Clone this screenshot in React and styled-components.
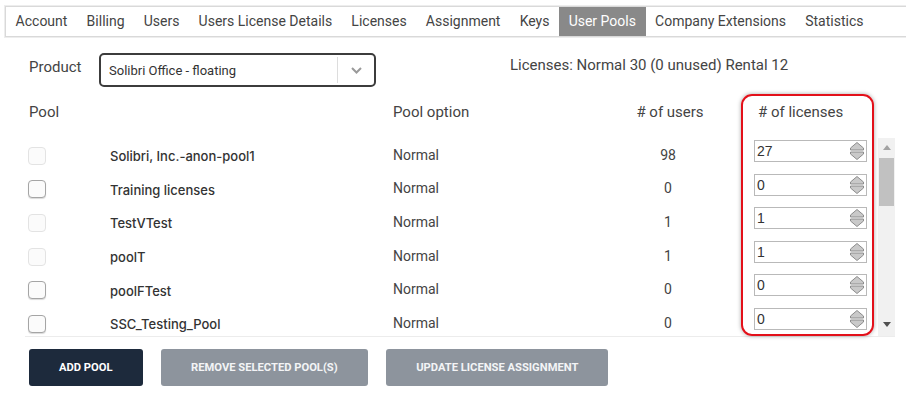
import React from "react";
import styled, { createGlobalStyle } from "styled-components";

const tabs = [
  "Account",
  "Billing",
  "Users",
  "Users License Details",
  "Licenses",
  "Assignment",
  "Keys",
  "User Pools",
  "Company Extensions",
  "Statistics",
];

const pools = [
  { name: "Solibri, Inc.-anon-pool1", option: "Normal", users: 98, licenses: 27, enabled: false },
  { name: "Training licenses", option: "Normal", users: 0, licenses: 0, enabled: true },
  { name: "TestVTest", option: "Normal", users: 1, licenses: 1, enabled: false },
  { name: "poolT", option: "Normal", users: 1, licenses: 1, enabled: false },
  { name: "poolFTest", option: "Normal", users: 0, licenses: 0, enabled: true },
  { name: "SSC_Testing_Pool", option: "Normal", users: 0, licenses: 0, enabled: true },
];

const Spinner = () => (
  <svg width="16" height="20" viewBox="0 0 16 20">
    <path d="M1.5 9 V7 L8 1.5 L14.5 7 V9 Z" fill="#c9c9c9" stroke="#8c8c8c" strokeWidth="1" strokeLinejoin="round" />
    <path d="M1.5 11 V13 L8 18.5 L14.5 13 V11 Z" fill="#c9c9c9" stroke="#8c8c8c" strokeWidth="1" strokeLinejoin="round" />
  </svg>
);

const App = () => {
  const [active, setActive] = React.useState("User Pools");

  return (
    <>
      <GlobalStyle />
      <TabBar>
        {tabs.map((tab) => (
          <Tab key={tab} isActive={tab === active} onClick={() => setActive(tab)}>
            {tab}
          </Tab>
        ))}
      </TabBar>

      <Content>
        <ProductRow>
          <Label>Product</Label>
          <Select>
            <SelectValue>Solibri Office - floating</SelectValue>
            <SelectArrow>
              <svg width="11" height="7" viewBox="0 0 11 7">
                <path d="M1 1 L5.5 5.5 L10 1" fill="none" stroke="#9a9a9a" strokeWidth="2" />
              </svg>
            </SelectArrow>
          </Select>
          <Summary>Licenses: Normal 30 (0 unused) Rental 12</Summary>
        </ProductRow>

        <TableWrap>
          <Highlight />
          <HeaderRow>
            <HeadCell>Pool</HeadCell>
            <HeadCell />
            <HeadCell>Pool option</HeadCell>
            <HeadCell center>
              # of users
            </HeadCell>
            <HeadCell indent>
              # of licenses
            </HeadCell>
          </HeaderRow>

          <Body>
            <Rows>
              {pools.map((pool) => (
                <Row key={pool.name}>
                  <Cell>
                    <Checkbox enabled={pool.enabled} />
                  </Cell>
                  <Name>{pool.name}</Name>
                  <Cell>{pool.option}</Cell>
                  <Cell center>{pool.users}</Cell>
                  <InputCell>
                    <NumberBox>
                      <NumberValue>{pool.licenses}</NumberValue>
                      <Spinner />
                    </NumberBox>
                  </InputCell>
                </Row>
              ))}
            </Rows>
            <Scrollbar>
              <ScrollArrow>
                <svg width="8" height="5" viewBox="0 0 8 5">
                  <path d="M0 5 L4 0 L8 5 Z" fill="#a3a3a3" />
                </svg>
              </ScrollArrow>
              <Thumb />
              <ScrollArrow bottom>
                <svg width="8" height="5" viewBox="0 0 8 5">
                  <path d="M0 0 L4 5 L8 0 Z" fill="#505050" />
                </svg>
              </ScrollArrow>
            </Scrollbar>
          </Body>
        </TableWrap>

        <Buttons>
          <Button primary>Add pool</Button>
          <Button>Remove selected pool(s)</Button>
          <Button>Update license assignment</Button>
        </Buttons>
      </Content>
    </>
  );
};

const GlobalStyle = createGlobalStyle`
  body {
    margin: 0;
    background: #ffffff;
    font-family: Roboto, "Liberation Sans", sans-serif;
    color: #444444;
  }
`;

const TabBar = styled.div`
  display: flex;
  margin: 6px 0 0 5px;
  height: 29px;
  border: 1px solid #d9d9d9;
  border-right: none;
  box-shadow: 0 0 0 1px #ededed;
`;

const Tab = styled.div`
  padding: 0 9.6px;
  line-height: 29px;
  font-size: 14px;
  cursor: pointer;
  color: ${(props) => (props.isActive ? "#ffffff" : "#444444")};
  background-color: ${(props) => (props.isActive ? "#898989" : "transparent")};
`;

const Content = styled.div`
  padding-left: 29px;
`;

const ProductRow = styled.div`
  display: flex;
  align-items: flex-start;
  margin-top: 16px;
`;

const Label = styled.div`
  width: 70px;
  font-size: 15px;
  margin-top: 5px;
`;

const Select = styled.div`
  box-sizing: border-box;
  display: flex;
  align-items: center;
  width: 277px;
  height: 34px;
  border: 2px solid #3c3c3c;
  border-radius: 5px;
`;

const SelectValue = styled.div`
  flex: 1;
  padding-left: 8px;
  font-size: 13px;
  color: #333333;
`;

const SelectArrow = styled.div`
  display: flex;
  align-items: center;
  justify-content: center;
  width: 36px;
  height: 26px;
  border-left: 1px solid #dddddd;
`;

const Summary = styled.div`
  margin-left: 134px;
  margin-top: 3px;
  font-size: 15px;
`;

const TableWrap = styled.div`
  position: relative;
  margin-top: 11px;
  width: 866px;
`;

const Highlight = styled.div`
  position: absolute;
  left: 712px;
  top: -4px;
  width: 133px;
  height: 242px;
  box-sizing: border-box;
  border: 2px solid #e3101a;
  border-radius: 11px;
  box-shadow: 0 0 4px rgba(0, 0, 0, 0.35);
  pointer-events: none;
`;

const columns = "81px 283px 217px 120px 148px";

const HeaderRow = styled.div`
  display: grid;
  grid-template-columns: ${columns};
  height: 28px;
  align-items: center;
`;

const HeadCell = styled.div`
  font-size: 15px;
  text-align: ${(props) => (props.center ? "center" : "left")};
  padding-left: ${(props) => (props.indent ? "28px" : "0")};
`;

const Body = styled.div`
  display: flex;
  margin-top: 12px;
  margin-left: -4px;
  padding-left: 4px;
  height: 198px;
  overflow: hidden;
  border-bottom: 1px solid #ececec;
`;

const Rows = styled.div`
  width: 849px;
`;

const Row = styled.div`
  display: grid;
  grid-template-columns: ${columns};
  height: 33.6px;
  align-items: center;
`;

const Cell = styled.div`
  font-size: 14px;
  color: #444444;
  text-align: ${(props) => (props.center ? "center" : "left")};
  padding-right: ${(props) => (props.center ? "4px" : "0")};
`;

const Name = styled.div`
  font-family: Inter, "Liberation Sans", sans-serif;
  font-weight: 500;
  font-size: 13px;
  color: #333333;
  padding-top: 3px;
`;

const Checkbox = styled.div`
  box-sizing: border-box;
  width: 18px;
  height: 18px;
  margin-left: -1px;
  margin-top: 2px;
  border-radius: 4px;
  background: #fbfbfb;
  border: 1px solid ${(props) => (props.enabled ? "#a5a5a5" : "#e3e3e3")};
  box-shadow: ${(props) => (props.enabled ? "0 1px 1px rgba(0,0,0,0.15)" : "none")};
`;

const InputCell = styled.div`
  align-self: start;
  padding: 2px 0 0 24px;
`;

const NumberBox = styled.div`
  box-sizing: border-box;
  display: flex;
  align-items: center;
  width: 113px;
  height: 22px;
  padding: 0 1px 0 2px;
  border: 1px solid #b9b9b9;
  background: #ffffff;
`;

const NumberValue = styled.div`
  flex: 1;
  font-family: "Liberation Sans", Arial, sans-serif;
  font-size: 14px;
  color: #333333;
`;

const Scrollbar = styled.div`
  display: flex;
  flex-direction: column;
  width: 17px;
  background: #f1f1f1;
`;

const ScrollArrow = styled.div`
  display: flex;
  align-items: center;
  justify-content: center;
  height: 19px;
  margin-top: ${(props) => (props.bottom ? "auto" : "0")};
  margin-bottom: ${(props) => (props.bottom ? "2px" : "0")};
`;

const Thumb = styled.div`
  height: 48px;
  margin: 1px 1px 0;
  background: #c1c1c1;
`;

const Buttons = styled.div`
  display: flex;
  gap: 18.5px;
  margin-top: 12px;
`;

const Button = styled.button`
  height: 37px;
  padding: 0 30px;
  border: none;
  border-radius: 3px;
  font-family: Roboto, "Liberation Sans", sans-serif;
  font-weight: 700;
  font-size: 11.2px;
  text-transform: uppercase;
  color: ${(props) => (props.primary ? "#ffffff" : "#f3f4f6")};
  background-color: ${(props) => (props.primary ? "#1d2a3c" : "#8d949d")};
`;

export default App;
